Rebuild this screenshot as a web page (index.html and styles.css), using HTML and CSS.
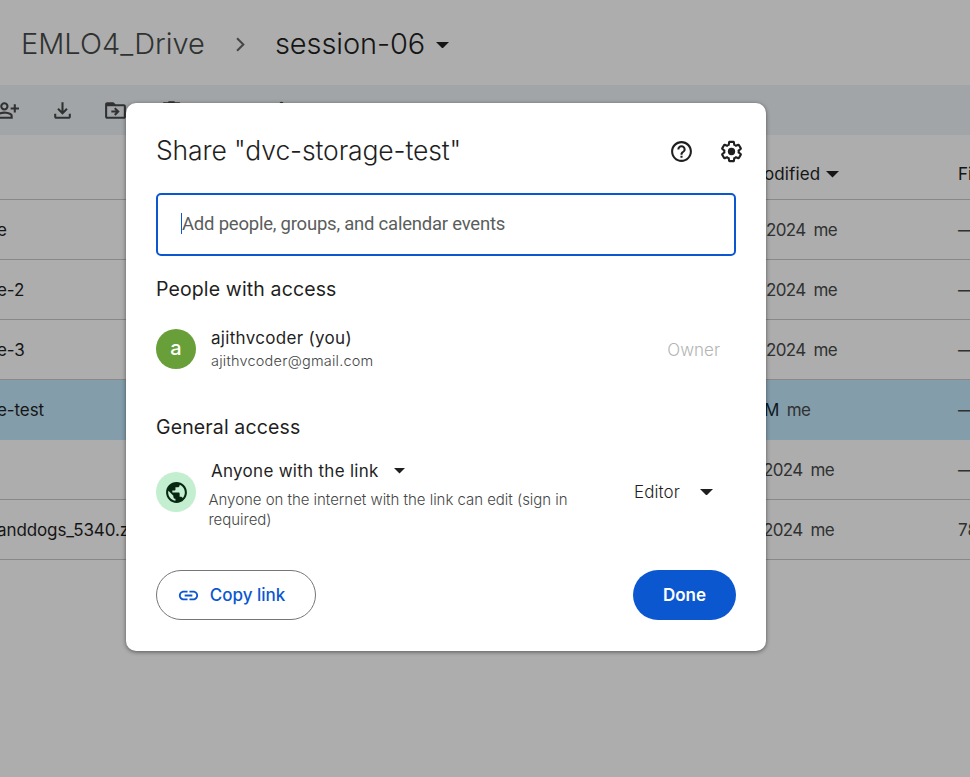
FILE: index.html
```html
<!DOCTYPE html>
<html lang="en">
<head>
<meta charset="utf-8">
<title>session-06</title>
<link rel="stylesheet" href="styles.css">
</head>
<body>
<div class="drive">
  <nav class="crumbs">
    <span class="crumb parent">EMLO4_Drive</span>
    <svg class="chevron" width="25" height="25" viewBox="0 0 24 24"><path d="M8 17.300 13.300 12 8 6.700 9.400 5.300l6.700 6.700-6.700 6.700z"/></svg>
    <span class="crumb current">session-06</span>
    <svg class="caret crumb-caret" viewBox="0 0 12 6"><path d="M0 0h12L6 6z"/></svg>
  </nav>
  <div class="toolbar">
    <svg class="tool person" viewBox="0 0 24 24"><path fill-rule="evenodd" d="M9 12a4 4 0 1 0 0-8 4 4 0 0 0 0 8zm0-2a2 2 0 1 1 0-4 2 2 0 0 1 0 4zm-8 10v-2.800c0-1.200.6-2 1.500-2.500C4.500 13.700 6.700 13 9 13s4.500.7 6.500 1.700c.9.500 1.500 1.300 1.500 2.500V20zm2-2h12v-.8c0-.4-.2-.7-.5-.9C12.900 15.500 11 15 9 15s-3.900.5-5.500 1.300c-.3.2-.5.5-.5.9zM18 14v-3h-3V9h3V6h2v3h3v2h-3v3z"/></svg>
    <svg class="tool" viewBox="0 0 24 24"><path d="M4 15h2v3h12v-3h2v3c0 1.100-.9 2-2 2H6c-1.100 0-2-.9-2-2zM15.590 9.590 13 12.170V4h-2v8.170L8.410 9.590 7 11l5 5 5-5z"/></svg>
    <svg class="tool folder" viewBox="0 0 24 24"><path fill-rule="evenodd" d="M4 20c-1.100 0-2-.9-2-2V6c0-1.100.9-2 2-2h6l2 2h8c1.100 0 2 .9 2 2v10c0 1.100-.9 2-2 2zm0-2h16V8H4zM12 17l4-4-4-4-1.400 1.400L12.200 12H8v2h4.200l-1.600 1.600z"/></svg>
    <svg class="tool" viewBox="0 0 24 24"><path fill-rule="evenodd" d="M7 21c-1.100 0-2-.9-2-2V6H4V4h5V3h6v1h5v2h-1v13c0 1.100-.9 2-2 2zM17 6H7v13h10z"/></svg>
    <svg class="tool" viewBox="0 0 24 24"><path d="M11 17H7a5 5 0 0 1 0-10h4v2H7a3 3 0 0 0 0 6h4zM8 13v-2h8v2zM13 17v-2h4a3 3 0 0 0 0-6h-4V7h4a5 5 0 0 1 0 10z"/></svg>
    <svg class="tool" viewBox="0 0 24 24"><circle cx="12" cy="5.600" r="2"/><circle cx="12" cy="12" r="2"/><circle cx="12" cy="18" r="2"/></svg>
  </div>
  <div class="files">
    <div class="row head"><span class="name"></span><span class="mod"><span>odified</span><svg class="caret" viewBox="0 0 12 6"><path d="M0 0h12L6 6z"/></svg></span><span class="size">File size</span></div>
    <div class="row"><span class="name">e</span><span class="mod"><span>2024</span><span>me</span></span><span class="size">—</span></div>
    <div class="row"><span class="name">e-2</span><span class="mod"><span>2024</span><span>me</span></span><span class="size">—</span></div>
    <div class="row"><span class="name">e-3</span><span class="mod"><span>2024</span><span>me</span></span><span class="size">—</span></div>
    <div class="row selected"><span class="name">e-test</span><span class="mod"><span class="time">M</span><span>me</span></span><span class="size">—</span></div>
    <div class="row"><span class="name"></span><span class="mod early"><span>2024</span><span>me</span></span><span class="size">—</span></div>
    <div class="row"><span class="name">anddogs_5340.zip</span><span class="mod early"><span>2024</span><span>me</span></span><span class="size">78</span></div>
  </div>
</div>

<section class="dialog">
  <header class="dialog-head">
    <h1>Share "dvc-storage-test"</h1>
    <svg class="head-icon" viewBox="0 0 24 24"><path d="M11 18h2v-2h-2v2zm1-16C6.480 2 2 6.480 2 12s4.480 10 10 10 10-4.480 10-10S17.520 2 12 2zm0 18c-4.410 0-8-3.590-8-8s3.590-8 8-8 8 3.590 8 8-3.590 8-8 8zm0-14c-2.210 0-4 1.790-4 4h2c0-1.100.9-2 2-2s2 .9 2 2c0 2-3 1.750-3 5h2c0-2.250 3-2.500 3-5 0-2.210-1.790-4-4-4z"/></svg>
    <svg class="head-icon" viewBox="0 0 24 24"><path d="M13.850 22.250h-3.700c-.74 0-1.360-.54-1.450-1.270l-.27-1.890c-.27-.14-.53-.29-.79-.46l-1.800.72c-.7.26-1.470-.03-1.810-.65L2.200 15.530c-.35-.66-.2-1.440.36-1.880l1.530-1.190c-.01-.15-.02-.3-.02-.46 0-.15.01-.31.02-.46l-1.520-1.190c-.59-.45-.74-1.260-.37-1.880l1.850-3.190c.34-.62 1.110-.9 1.790-.63l1.810.73c.26-.17.52-.32.78-.46l.27-1.910c.09-.7.71-1.250 1.440-1.250h3.700c.74 0 1.360.54 1.450 1.270l.27 1.890c.27.14.53.29.79.46l1.800-.72c.71-.26 1.480.03 1.820.65l1.840 3.180c.36.66.2 1.440-.36 1.880l-1.520 1.190c.01.15.02.3.02.46s-.01.31-.02.46l1.520 1.190c.56.45.72 1.230.37 1.860l-1.860 3.220c-.34.62-1.110.9-1.800.63l-1.800-.72c-.26.17-.52.32-.78.46l-.27 1.910c-.1.68-.72 1.220-1.460 1.220zm-3.230-2h2.760l.37-2.550.53-.22c.44-.18.88-.44 1.340-.78l.45-.34 2.380.96 1.380-2.400-2.030-1.580.07-.56c.03-.26.06-.51.06-.78s-.03-.53-.06-.78l-.07-.56 2.030-1.580-1.390-2.400-2.390.96-.45-.35c-.42-.32-.87-.58-1.330-.77l-.52-.22-.37-2.550h-2.760l-.37 2.550-.53.21c-.44.19-.88.44-1.340.79l-.45.33-2.380-.95-1.390 2.390 2.030 1.580-.07.56a7 7 0 0 0-.06.79c0 .26.02.53.06.78l.07.56-2.030 1.580 1.380 2.400 2.390-.96.45.35c.43.33.86.58 1.330.77l.53.22z"/><circle cx="12" cy="12" r="3.500"/></svg>
  </header>
  <div class="field"><span class="cursor"></span><span class="placeholder">Add people, groups, and calendar events</span></div>
  <h2 class="people-title">People with access</h2>
  <div class="person-row">
    <span class="avatar">a</span>
    <div class="who"><span class="who-name">ajithvcoder (you)</span><span class="who-mail">ajithvcoder@gmail.com</span></div>
    <span class="owner">Owner</span>
  </div>
  <h2 class="general-title">General access</h2>
  <div class="access-row">
    <span class="globe"><svg viewBox="0 0 24 24"><path d="M12 2C6.480 2 2 6.480 2 12s4.480 10 10 10 10-4.480 10-10S17.520 2 12 2zm-1 17.930c-3.950-.49-7-3.850-7-7.930 0-.62.08-1.210.21-1.790L9 15v1c0 1.100.9 2 2 2v1.930zm6.900-2.540c-.26-.81-1-1.390-1.900-1.390h-1v-3c0-.55-.45-1-1-1H8v-2h2c.55 0 1-.45 1-1V7h2c1.100 0 2-.9 2-2v-.41c2.930 1.190 5 4.060 5 7.410 0 2.080-.8 3.970-2.100 5.390z"/></svg></span>
    <div class="scope">
      <div class="scope-select"><span>Anyone with the link</span><svg class="caret small" viewBox="0 0 12 6"><path d="M0 0h12L6 6z"/></svg></div>
      <p>Anyone on the internet with the link can edit (sign in<br>required)</p>
    </div>
    <div class="role"><span>Editor</span><svg class="caret" viewBox="0 0 12 6"><path d="M0 0h12L6 6z"/></svg></div>
  </div>
  <footer class="actions">
    <button class="copy"><svg viewBox="0 0 24 24"><path d="M3.900 12c0-1.710 1.390-3.100 3.100-3.100h4V7H7c-2.760 0-5 2.240-5 5s2.240 5 5 5h4v-1.900H7c-1.710 0-3.100-1.390-3.100-3.100zM8 13h8v-2H8v2zm9-6h-4v1.900h4c1.710 0 3.100 1.390 3.100 3.100s-1.390 3.100-3.100 3.100h-4V17h4c2.760 0 5-2.240 5-5s-2.240-5-5-5z"/></svg><span>Copy link</span></button>
    <button class="done"><span>Done</span></button>
  </footer>
</section>
</body>
</html>
```
FILE: styles.css
```css
* { box-sizing: border-box; }
html, body { height: 100%; }
body {
  margin: 0;
  overflow: hidden;
  position: relative;
  background: #adadad;
  color: #1f1f1f;
  font-family: Inter, "Liberation Sans", sans-serif;
  font-size: 17px;
}
svg { display: block; flex: none; fill: currentColor; }
h1, h2, p { margin: 0; font-weight: 400; }
span { white-space: nowrap; }
.caret { width: 13px; height: 6.500px; }

.crumbs {
  height: 85px;
  padding: 2px 0 0 21px;
  display: flex;
  align-items: center;
}
.crumb { font-size: 29px; font-weight: 300; }
.parent { width: 184px; color: #303232; }
.chevron { margin: 2px 0 0 23px; color: #444746; }
.current { width: 149px; margin-left: 22px; color: #151515; letter-spacing: -.1px; }
.crumb-caret { margin: 3px 0 0 12px; color: #151515; }

.toolbar {
  height: 50px;
  display: flex;
  align-items: center;
  gap: 30px;
  background: #a2a5a8;
  color: #303232;
}
.tool { width: 25px; height: 25px; }
.person { margin-left: -5.500px; }
.folder { margin: 0 1px 0 -2px; }

.row {
  height: 60px;
  display: grid;
  grid-template-columns: 767px 191px 1fr;
  align-items: center;
  border-bottom: 1px solid #888;
  color: #303232;
  font-size: 17px;
  white-space: nowrap;
  overflow: hidden;
}
.head { height: 65px; padding-top: 13px; }
.head .caret { margin: 2px 0 0 -2px; }
.row .name, .head { color: #151515; }
.row .name { margin-left: -3px; letter-spacing: -.1px; }
.mod { display: flex; align-items: center; gap: 8px; margin-left: -1px; letter-spacing: -.65px; }
.head .mod { margin-left: -3px; letter-spacing: .1px; }
.mod.early { margin-left: -4px; }
.selected { border-bottom: 0; background: #849dab; }
.selected .mod { margin-left: -3px; }
.time { color: #0b1820; }

.dialog {
  position: absolute;
  left: 126px;
  top: 103px;
  width: 640px;
  height: 548px;
  padding: 30px;
  background: #fff;
  border-radius: 10px;
  box-shadow: 0 1px 4px rgba(0, 0, 0, .5);
  display: flex;
  flex-direction: column;
}
.dialog-head { height: 36px; margin-right: -7.500px; display: flex; align-items: center; gap: 25px; }
h1 { flex: 1; margin-top: -2px; font-size: 26.500px; font-weight: 330; letter-spacing: -.12px; white-space: nowrap; }
.head-icon { width: 25px; height: 25px; }
.field {
  height: 63px;
  margin-top: 24px;
  padding: 0 0 2px 23px;
  border: 2px solid #0b57d0;
  border-radius: 5px;
  display: flex;
  align-items: center;
}
.cursor { width: 1px; height: 21px; background: #0b57d0; }
.placeholder { font: 18.500px Roboto, sans-serif; letter-spacing: -.22px; color: #5a5d5c; }
h2 { font-size: 19.500px; line-height: 30px; letter-spacing: .13px; }
.people-title { margin-top: 18px; }
.person-row { height: 40px; margin-top: 25px; display: flex; align-items: center; }
.avatar {
  width: 40px; height: 40px; border-radius: 50%; padding-bottom: 2px;
  display: flex; align-items: center; justify-content: center;
  background: #689f38; color: #fff; font-size: 20px; font-weight: 500;
}
.who { flex: 1; margin-left: 15px; display: flex; flex-direction: column; }
.who-name { font-size: 17px; line-height: 24px; letter-spacing: .31px; }
.who-mail { font-size: 14.500px; line-height: 22px; color: #444746; font-weight: 350; letter-spacing: .22px; }
.owner { margin: 2px 16px 0 0; color: #b5b5b5; font-weight: 300; }
.general-title { margin-top: 43px; }
.access-row { height: 74px; margin-top: 16px; display: flex; }
.globe {
  width: 40px; height: 40px; margin-top: 14px; border-radius: 50%;
  display: flex; align-items: center; justify-content: center;
  background: #c4eed0; color: #072711;
}
.globe svg { width: 25px; height: 25px; }
.scope { flex: 1; margin-left: 12.500px; }
.scope-select { height: 26px; margin-left: 2.500px; display: flex; align-items: center; gap: 15px; letter-spacing: .28px; }
.small { width: 11px; height: 5.500px; }
.scope p { margin-top: 6px; font-size: 15px; line-height: 20px; font-weight: 300; letter-spacing: -.03px; color: #444746; }
.role { height: 40px; margin: 14px 23px 0 0; display: flex; align-items: center; gap: 20px; font-weight: 300; letter-spacing: .1px; }
.actions { margin-top: 38px; display: flex; justify-content: space-between; }
button {
  height: 50px; padding: 0; border: 0; border-radius: 25px;
  display: flex; align-items: center; justify-content: center;
  font: 500 17px Inter, "Liberation Sans", sans-serif;
}
.copy { width: 160px; gap: 10px; padding-right: 10px; background: #fff; border: 1px solid #747775; color: #0b57d0; }
.copy svg { width: 23px; height: 23px; }
.done { width: 103px; background: #0b57d0; color: #fff; font-weight: 600; }
```
